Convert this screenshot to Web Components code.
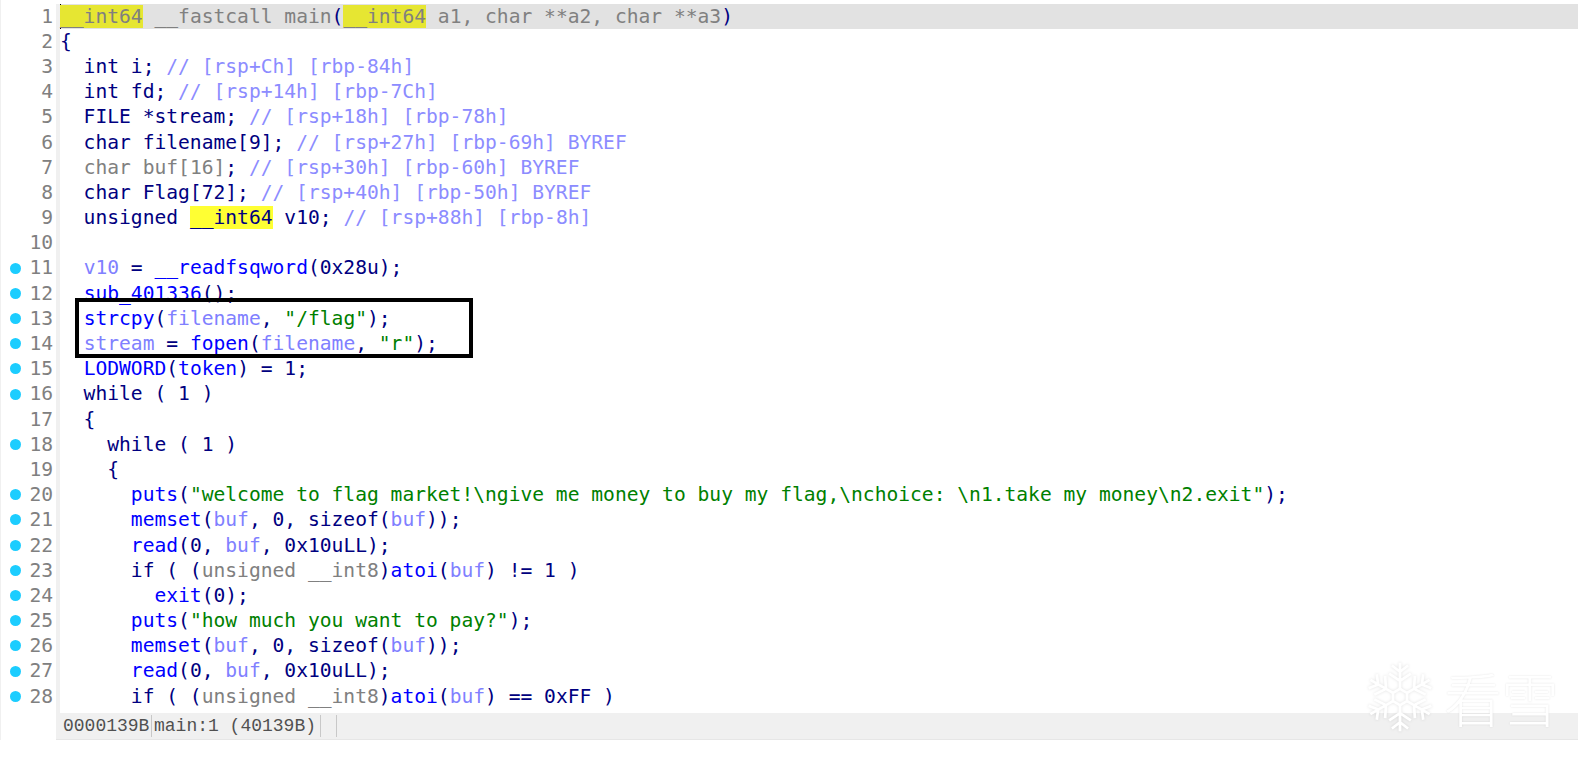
<!DOCTYPE html>
<html>
<head>
<meta charset="utf-8">
<style>
  html, body { margin: 0; padding: 0; background: #fff; overflow: hidden; }
  body { width: 1578px; height: 760px; position: relative; }
</style>
</head>
<body>
<pseudo-view>
    <status-cell slot="status" style="width:91px">0000139B</status-cell>
    <status-cell slot="status" style="width:169px">main:1 (40139B)</status-cell>
    <status-cell slot="status" style="width:16px"></status-cell>
</pseudo-view>
<kanxue-mark></kanxue-mark>

<script>
(function () {
    const C = s => `<span class="c">${s}</span>`;   // comment, pale blue
    const V = s => `<span class="v">${s}</span>`;   // local variable
    const F = s => `<span class="f">${s}</span>`;   // function name
    const S = s => `<span class="s">${s}</span>`;   // string literal
    const G = s => `<span class="g">${s}</span>`;   // greyed out, unused
    const Y = s => `<span class="y">${s}</span>`;   // highlight on current line

    // [has breakpoint dot, html of the line]
    const LINES = [
        [0, `${G(Y('__int64') + ' __fastcall main')}(${G(Y('__int64') + ' a1, char **a2, char **a3')})`],
        [0, `{`],
        [0, `  int i; ${C('// [rsp+Ch] [rbp-84h]')}`],
        [0, `  int fd; ${C('// [rsp+14h] [rbp-7Ch]')}`],
        [0, `  FILE *stream; ${C('// [rsp+18h] [rbp-78h]')}`],
        [0, `  char filename[9]; ${C('// [rsp+27h] [rbp-69h] BYREF')}`],
        [0, `  ${G('char buf[16]')}; ${C('// [rsp+30h] [rbp-60h] BYREF')}`],
        [0, `  char Flag[72]; ${C('// [rsp+40h] [rbp-50h] BYREF')}`],
        [0, `  unsigned <span class="yy">__int64</span> v10; ${C('// [rsp+88h] [rbp-8h]')}`],
        [0, ``],
        [1, `  ${V('v10')} = ${F('__readfsqword')}(0x28u);`],
        [1, `  ${F('sub_401336')}();`],
        [1, `  ${F('strcpy')}(${V('filename')}, ${S('"/flag"')});`],
        [1, `  ${V('stream')} = ${F('fopen')}(${V('filename')}, ${S('"r"')});`],
        [1, `  ${F('LODWORD')}(${F('token')}) = 1;`],
        [1, `  while ( 1 )`],
        [0, `  {`],
        [1, `    while ( 1 )`],
        [0, `    {`],
        [1, `      ${F('puts')}(${S('"welcome to flag market!\\ngive me money to buy my flag,\\nchoice: \\n1.take my money\\n2.exit"')});`],
        [1, `      ${F('memset')}(${V('buf')}, 0, sizeof(${V('buf')}));`],
        [1, `      ${F('read')}(0, ${V('buf')}, 0x10uLL);`],
        [1, `      if ( (${G('unsigned __int8')})${F('atoi')}(${V('buf')}) != 1 )`],
        [1, `        ${F('exit')}(0);`],
        [1, `      ${F('puts')}(${S('"how much you want to pay?"')});`],
        [1, `      ${F('memset')}(${V('buf')}, 0, sizeof(${V('buf')}));`],
        [1, `      ${F('read')}(0, ${V('buf')}, 0x10uLL);`],
        [1, `      if ( (${G('unsigned __int8')})${F('atoi')}(${V('buf')}) == 0xFF )`],
    ];

    class CodeLine extends HTMLElement {
        constructor() {
            super();
            const root = this.attachShadow({ mode: 'open' });
            root.innerHTML = `
<style>
    :host { display: flex; height: 25.2px; line-height: 25.2px; white-space: pre; }
    :host([current]) .code { background: #e2e2e2; box-shadow: inset 1px 0 #000; }
    .gutter { flex: 0 0 55px; box-sizing: border-box; padding-right: 3px; display: flex; justify-content: space-between; align-items: center; color: #808080; background: #fff; }
    .dot { width: 11px; height: 11px; margin-left: 9px; border-radius: 50%; background: #1ccdff; visibility: hidden; }
    :host([dot]) .dot { visibility: visible; }
    .strip { flex: 0 0 4px; background: #f0f0f0; }
    .code { flex: 1; color: #000080; }
    .c { color: #8c8cff; }
    .v { color: #8080ff; }
    .f { color: #0000ff; }
    .s { color: #008000; }
    .g { color: #808080; }
    .y { background: #e6e632; }
    .yy { background: #ffff33; }
</style>
<div class="gutter"><span class="dot"></span><span class="num"></span></div>
<div class="strip"></div>
<div class="code"></div>`;
        }
        connectedCallback() {
            this.shadowRoot.querySelector('.num').textContent = this.getAttribute('n');
        }
        set html(v) { this.shadowRoot.querySelector('.code').innerHTML = v; }
    }

    class StatusCell extends HTMLElement {
        constructor() {
            super();
            this.attachShadow({ mode: 'open' }).innerHTML = `
<style>
    :host { display: block; box-sizing: border-box; flex: none; height: 22px; line-height: 22px; padding-left: 2px; border-right: 1px solid #c8c8c8; }
</style>
<slot></slot>`;
        }
    }

    class PseudoView extends HTMLElement {
        constructor() {
            super();
            const root = this.attachShadow({ mode: 'open' });
            root.innerHTML = `
<style>
    :host { display: flex; flex-direction: column; box-sizing: border-box; width: 1578px; height: 740px; padding-top: 3.6px; font: 19.62px "DejaVu Sans Mono", monospace; border-left: 1px solid #f0f0f0; }
    #rows { flex: 1; background: linear-gradient(#f0f0f0, #f0f0f0) 55px 0 / 4px 100% no-repeat; }
    .status { flex: 0 0 27px; box-sizing: border-box; margin-left: 55px; padding: 2px 0 0 5px; display: flex; background: #f0f0f0; border-bottom: 1px solid #e6e6e6; color: #505050; font: 18px "Liberation Mono", monospace; }
    .box { position: absolute; left: 75px; top: 298px; width: 398px; height: 60px; box-sizing: border-box; border: 4px solid #000; }
</style>
<div id="rows"></div>
<div class="status"><slot name="status"></slot></div>
<div class="box"></div>`;
            const rows = root.getElementById('rows');
            LINES.forEach(([dot, html], i) => {
                const line = document.createElement('code-line');
                line.setAttribute('n', i + 1);
                if (dot) line.setAttribute('dot', '');
                if (i === 0) line.setAttribute('current', '');
                rows.appendChild(line);
                line.html = html;
            });
        }
    }

    class KanxueMark extends HTMLElement {
        constructor() {
            super();
            let arms = '';
            for (let a = 0; a < 6; a++) {
                arms += `<g transform="rotate(${a * 60} 40 40)"><path d="M40 31V2M40 12l-9-7M40 12l9-7M40 22l-12-8M40 22l12-8"/></g>`;
            }
            this.attachShadow({ mode: 'open' }).innerHTML = `
<style>
    :host { position: absolute; left: 1364px; top: 657px; display: flex; align-items: center; font: 200 58px "Noto Sans CJK SC", sans-serif; letter-spacing: -1px; color: #fff; text-shadow: 0 0 2px rgba(0,0,0,.12); }
    svg { width: 72px; height: 80px; fill: none; stroke: #fff; stroke-width: 3; filter: drop-shadow(0 0 1.5px rgba(0,0,0,.12)); }
    span { line-height: 80px; margin-left: 8px; }
</style>
<svg viewBox="0 0 80 80"><path d="M40 31l7.8 4.5v9L40 49l-7.8-4.5v-9z"/>${arms}</svg>
<span>看雪</span>`;
        }
    }

    customElements.define('code-line', CodeLine);
    customElements.define('status-cell', StatusCell);
    customElements.define('pseudo-view', PseudoView);
    customElements.define('kanxue-mark', KanxueMark);
})();
</script>
</body>
</html>
